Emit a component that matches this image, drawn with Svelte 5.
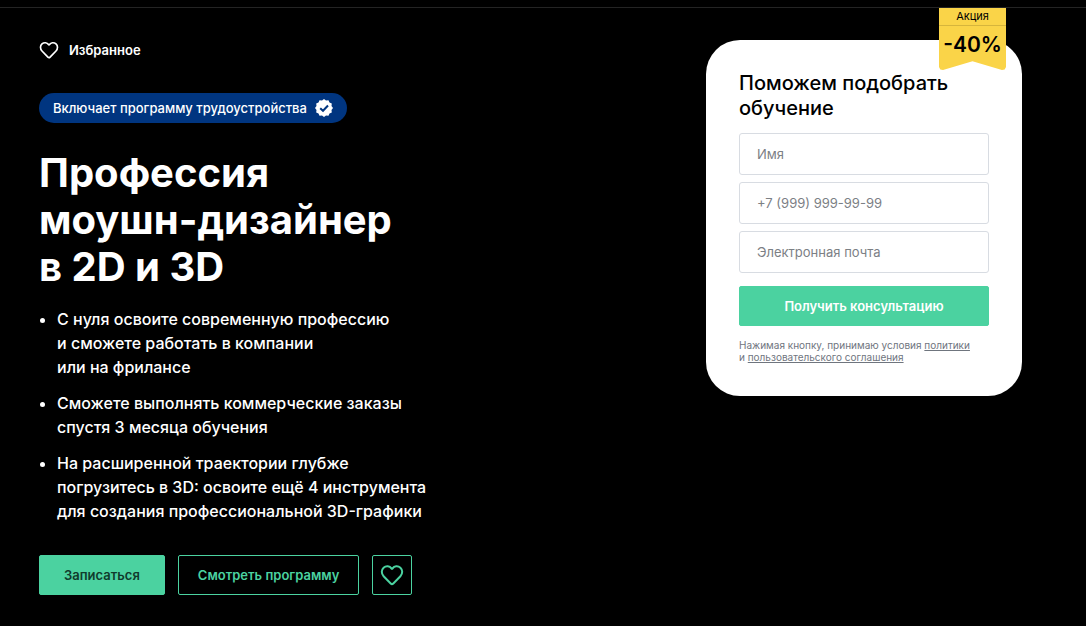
<script>
	const benefits = [
		['С нуля освоите современную профессию', 'и сможете работать в компании', 'или на фрилансе'],
		['Сможете выполнять коммерческие заказы', 'спустя 3 месяца обучения'],
		['На расширенной траектории глубже', 'погрузитесь в 3D: освоите ещё 4 инструмента', 'для создания профессиональной 3D-графики']
	];

	let name = $state('');
	let phone = $state('');
	let email = $state('');
	let favorite = $state(false);

	const toggleFavorite = () => {
		favorite = !favorite;
	};

	const handleSubmit = e => {
		e.preventDefault();
	};
</script>

{#snippet heart()}
	<svg class="heart" viewBox="0 0 24 24" aria-hidden="true">
		<path d="M10.7 20.5 3.6 13.2C1.2 10.7 1.2 6.900 3.600 4.700c2.400-2.200 6.200-1.800 7.800.7.3.5.9.5 1.200 0 1.600-2.500 5.400-2.900 7.800-.7 2.400 2.200 2.400 6 0 8.500l-7.100 7.300c-.8.8-1.800.8-2.600 0z" />
	</svg>
{/snippet}

<main class="page">
	<section class="intro">
		<button type="button" class="favorite" aria-pressed={favorite} onclick={toggleFavorite}>
			{@render heart()}
			<span>Избранное</span>
		</button>

		<div class="tag">
			<span>Включает программу трудоустройства</span>
			<svg class="verified" viewBox="0 0 18 18" aria-hidden="true">
				<path class="seal" d="M9 0l2 1.5 2.5-.3 1 2.3 2.3 1-.3 2.5L18 9l-1.5 2 .3 2.5-2.3 1-1 2.3-2.5-.3L9 18l-2-1.5-2.5.3-1-2.3-2.3-1 .3-2.5L0 9l1.5-2-.3-2.5 2.3-1 1-2.3 2.5.3z" />
				<path class="tick" d="M5.2 9.2 8 11.800 13 6.500" />
			</svg>
		</div>

		<h1>Профессия<br />моушн-дизайнер<br />в 2D и 3D</h1>

		<ul class="benefits">
			{#each benefits as lines}
				<li>
					{#each lines as line}
						<span>{line}</span>
					{/each}
				</li>
			{/each}
		</ul>

		<div class="actions">
			<button type="button" class="button enroll">Записаться</button>
			<button type="button" class="button outline program">Смотреть программу</button>
			<button type="button" class="button outline icon" aria-label="Избранное" aria-pressed={favorite} onclick={toggleFavorite}>
				{@render heart()}
			</button>
		</div>
	</section>

	<form class="card" onsubmit={handleSubmit}>
		<div class="ribbon">
			<span class="ribbon-title">Акция</span>
			<strong>-40%</strong>
		</div>
		<h2>Поможем подобрать обучение</h2>
		<div class="fields">
			<input type="text" aria-label="Имя" placeholder="Имя" bind:value={name} />
			<input type="tel" aria-label="Телефон" placeholder="+7 (999) 999-99-99" bind:value={phone} />
			<input type="email" aria-label="Электронная почта" placeholder="Электронная почта" bind:value={email} />
		</div>
		<button type="submit" class="button submit">Получить консультацию</button>
		<p class="terms">
			Нажимая кнопку, принимаю условия <a href="#policy">политики</a><br />
			и <a href="#agreement">пользовательского соглашения</a>
		</p>
	</form>
</main>

<style>
	:global(body) {
		background: #000;
	}

	.page {
		box-sizing: border-box;
		display: flex;
		justify-content: space-between;
		align-items: flex-start;
		gap: 32px;
		margin-top: 7px;
		padding: 32px 64px 30px 39px;
		border-top: 1px solid #242424;
		color: #fff;
		font-family: Inter, "Liberation Sans", sans-serif;
	}

	button {
		font: inherit;
		cursor: pointer;
	}

	.intro {
		display: flex;
		flex-direction: column;
		align-items: flex-start;
	}

	.heart {
		display: block;
		width: 20px;
		height: 20px;
		fill: none;
		stroke: currentColor;
		stroke-width: 2;
		stroke-linejoin: round;
	}

	.favorite {
		display: flex;
		align-items: center;
		gap: 10px;
		padding: 0;
		border: 0;
		background: none;
		color: #fff;
		font-size: 13px;
		font-weight: 600;
		line-height: 20px;
	}

	.tag {
		display: flex;
		align-items: center;
		gap: 8px;
		margin-top: 33px;
		padding: 0 14px;
		border-radius: 15px;
		background: #003580;
		font-size: 13px;
		font-weight: 500;
		line-height: 30px;
	}

	.verified {
		width: 18px;
		height: 18px;
	}

	.seal {
		fill: #fff;
	}

	.tick {
		fill: none;
		stroke: #003580;
		stroke-width: 2;
	}

	h1 {
		margin: 26px 0 0;
		font-size: 40px;
		font-weight: 700;
		line-height: 47px;
	}

	.benefits {
		display: flex;
		flex-direction: column;
		gap: 12px;
		margin: 17px 0 0;
		padding-left: 18px;
		font-size: 16px;
		font-weight: 500;
		line-height: 24px;
	}

	.benefits li {
		padding: 0;
	}

	.benefits span {
		display: block;
	}

	.actions {
		display: flex;
		gap: 13px;
		margin-top: 32px;
	}

	.button {
		box-sizing: border-box;
		height: 40px;
		border: 1px solid #4bd2a0;
		border-radius: 2px;
		background: #4bd2a0;
		font-size: 13px;
		font-weight: 600;
	}

	.enroll {
		padding: 0 24px;
		color: #103b2c;
	}

	.outline {
		background: none;
		color: #4bd2a0;
	}

	.program {
		padding: 0 19px;
	}

	.icon {
		display: flex;
		align-items: center;
		justify-content: center;
		width: 40px;
		padding: 0;
	}

	.icon .heart {
		width: 24px;
		height: 24px;
	}

	.card {
		position: relative;
		box-sizing: border-box;
		flex: none;
		width: 316px;
		padding: 31px 33px 33px;
		border-radius: 34px;
		background: #fff;
		color: #000;
	}

	.ribbon {
		position: absolute;
		top: -32px;
		right: 16px;
		width: 67px;
		height: 62px;
		background: #fad448;
		clip-path: polygon(0 0, 100% 0, 100% 95%, 98% 99%, 94% 100%, 50% 86%, 6% 100%, 2% 99%, 0 95%);
		text-align: center;
	}

	.ribbon-title {
		display: block;
		border-bottom: 1px solid #d6b53c;
		font-size: 11px;
		line-height: 17px;
	}

	.ribbon strong {
		display: block;
		font-size: 21px;
		font-weight: 600;
		line-height: 38px;
	}

	h2 {
		margin: 0;
		font-size: 20px;
		font-weight: 500;
		line-height: 25px;
	}

	.fields {
		display: flex;
		flex-direction: column;
		gap: 7px;
		margin-top: 12px;
	}

	input {
		box-sizing: border-box;
		width: 100%;
		height: 42px;
		padding: 0 17px;
		border: 1px solid #d8dce2;
		border-radius: 3px;
		background: #fff;
		color: #000;
		font: 13px Inter, "Liberation Sans", sans-serif;
	}

	input::placeholder {
		color: #7c8085;
		opacity: 1;
	}

	.submit {
		width: 100%;
		margin-top: 13px;
		color: #fff;
	}

	.terms {
		margin: 13px 0 0;
		color: #6f757e;
		font-size: 10px;
		line-height: 12px;
		white-space: nowrap;
	}

	.terms a {
		color: inherit;
	}
</style>
